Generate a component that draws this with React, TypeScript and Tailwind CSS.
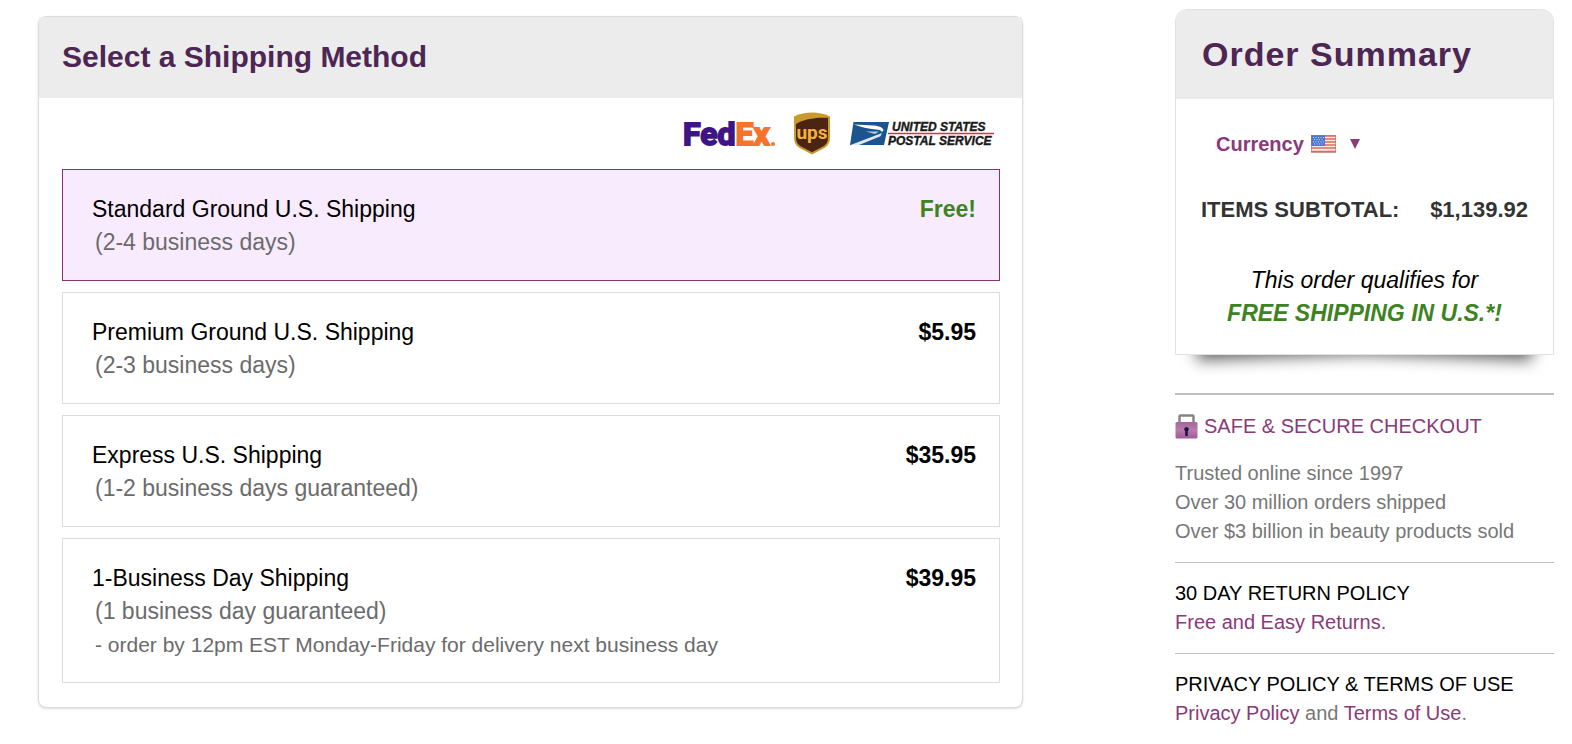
import React, { useState } from "react";

interface ShippingMethod {
  id: string;
  name: string;
  time: string;
  note?: string;
  price: string;
  free?: boolean;
}

const shippingMethods: ShippingMethod[] = [
  {
    id: "standard",
    name: "Standard Ground U.S. Shipping",
    time: "(2-4 business days)",
    price: "Free!",
    free: true,
  },
  {
    id: "premium",
    name: "Premium Ground U.S. Shipping",
    time: "(2-3 business days)",
    price: "$5.95",
  },
  {
    id: "express",
    name: "Express U.S. Shipping",
    time: "(1-2 business days guaranteed)",
    price: "$35.95",
  },
  {
    id: "one-day",
    name: "1-Business Day Shipping",
    time: "(1 business day guaranteed)",
    note: "- order by 12pm EST Monday-Friday for delivery next business day",
    price: "$39.95",
  },
];

const FedExLogo: React.FC = () => (
  <svg width="92" height="43" viewBox="0 0 92 43" role="img" aria-label="FedEx">
    <text
      x="0"
      y="33"
      fontSize="32"
      fontWeight="700"
      strokeWidth="1.8"
      className="font-[Roboto,sans-serif]"
    >
      <tspan fill="#3f1585" stroke="#3f1585">Fed</tspan>
      <tspan fill="#f4742b" stroke="#f4742b">Ex</tspan>
    </text>
    <circle cx="90" cy="32" r="2" fill="#f4742b" />
  </svg>
);

const UpsLogo: React.FC = () => (
  <svg width="38" height="43" viewBox="0 0 38 43" role="img" aria-label="UPS">
    <path
      d="M1 4.5C7 1.500 13 .5 19 .5s12 1 18 4V25c0 6-2 9-6.500 11.500L19 42.500 7.500 36.500C3 34 1 31 1 25Z"
      fill="#c99a2e"
    />
    <path
      d="M3 12C11 7 22 5 35 5.800V25c0 5-1.500 7.500-5.500 9.800L19 40.300 8.500 34.800C4.500 32.500 3 30 3 25Z"
      fill="#4b2414"
    />
    <text
      x="19"
      y="27"
      fontSize="19"
      fontWeight="700"
      textAnchor="middle"
      fill="#f0b43c"
      className="font-[Roboto,sans-serif]"
    >
      ups
    </text>
  </svg>
);

const UspsLogo: React.FC = () => (
  <svg
    width="146"
    height="27"
    viewBox="0 0 146 27"
    role="img"
    aria-label="United States Postal Service"
  >
    <path d="M4.500 2H40l-5 23H1Z" fill="#1c5490" />
    <path d="M5 4.500 25 5.500c6 .5 9.500 2.500 9.500 5L33 12c-1.500-2-3-2.300-6-2.500C19 9 12 7 5 4.500Z" fill="#fff" />
    <path d="M1.500 25 33 13l-1.500 3.200L10 25Z" fill="#dfe8f1" />
    <path d="M17 11.500h13l-4 2.500Z" fill="#b9cbdd" />
    <path d="M39 13.500h106" stroke="#d8324a" strokeWidth="1.300" />
    <g
      fontSize="12"
      fontWeight="700"
      fontStyle="italic"
      fill="#1a1a1a"
      stroke="#1a1a1a"
      strokeWidth=".4"
      className="font-['Liberation_Sans',Arial,sans-serif]"
    >
      <text x="43" y="11">UNITED STATES</text>
      <text x="39" y="25">POSTAL SERVICE</text>
    </g>
  </svg>
);

const UsFlag: React.FC = () => (
  <svg width="25" height="18" viewBox="0 0 25 18" aria-hidden="true">
    <path d="M0 0h25v18H0z" fill="#f7ece8" />
    <path
      d="M0 1h25M0 4h25M0 7h25M0 10h25M0 13h25M0 16.500h25"
      stroke="#e0695c"
      strokeWidth="1.500"
    />
    <path d="M0 0h14v11H0z" fill="#4a76cc" />
    <path
      d="M2 2.500h11M3 4.700h10M2 6.900h11M3 9h10"
      stroke="#d5e2fa"
      strokeWidth="1"
      strokeDasharray="1 1.500"
    />
    <path d="M.5.5h24v17H.5z" fill="none" stroke="#b5765f" strokeOpacity=".6" />
  </svg>
);

const LockIcon: React.FC = () => (
  <svg width="23" height="25" viewBox="0 0 23 25" aria-hidden="true">
    <defs>
      <linearGradient id="lock-body" x1="0" y1="0" x2="0" y2="1">
        <stop offset="0" stopColor="#a8649c" />
        <stop offset=".5" stopColor="#b77bad" />
        <stop offset="1" stopColor="#a0589a" />
      </linearGradient>
    </defs>
    <path d="M4.500 9V2.500q0-1 1-1h12q1 0 1 1V9" fill="none" stroke="#858585" strokeWidth="2.500" />
    <rect x=".5" y="8" width="22" height="16.500" rx="1.500" fill="url(#lock-body)" />
    <path d="M11.500 13a2.300 2.300 0 0 1 1.300 4.200V22h-2.600v-4.800A2.300 2.300 0 0 1 11.500 13Z" fill="#24103a" />
  </svg>
);

// Lifted-corner shadow that hangs below the summary card
const CardShadow: React.FC = () => (
  <svg
    className="block h-[38px] w-full"
    viewBox="0 0 379 38"
    preserveAspectRatio="none"
    aria-hidden="true"
  >
    <defs>
      <filter
        id="card-blur"
        filterUnits="userSpaceOnUse"
        x="-20"
        y="-60"
        width="420"
        height="120"
        colorInterpolationFilters="sRGB"
      >
        <feGaussianBlur stdDeviation="8" />
      </filter>
    </defs>
    <path
      d="M22-30H357V5Q270 1 190-1 110 1 22 5Z"
      fill="#000"
      fillOpacity=".65"
      filter="url(#card-blur)"
    />
  </svg>
);

const ShippingCard: React.FC = () => {
  const [selected, setSelected] = useState("standard");

  return (
    <section className="mt-4 min-w-0 flex-1 rounded-lg border border-[#dcdcdc] bg-white shadow-sm">
      <h1 className="bg-[#ececec] px-[23px] pt-[22px] pb-[23px] text-[30px] leading-9 font-bold text-[#4d2653]">
        Select a Shipping Method
      </h1>

      <div className="pr-[22px] pb-6 pl-[23px]">
        <div className="flex items-center justify-end gap-[18px] py-[14px] pr-[5px]">
          <FedExLogo />
          <UpsLogo />
          <UspsLogo />
        </div>

        <fieldset aria-label="Shipping method" className="flex flex-col gap-[11px]">
          {shippingMethods.map((method) => (
            <label
              key={method.id}
              className="flex cursor-pointer justify-between border border-[#dcdcdc] pt-[23px] pr-[23px] pb-[21px] pl-[29px] text-[23px] leading-[33px] has-[:checked]:border-[#8a3073] has-[:checked]:bg-[#f9ebfe]"
            >
              <input
                type="radio"
                name="shipping"
                value={method.id}
                checked={selected === method.id}
                onChange={() => setSelected(method.id)}
                className="sr-only"
              />
              <span>
                <span className="block">{method.name}</span>
                <span className="block pl-[3px] text-[#6b6b6b]">{method.time}</span>
                {method.note && (
                  <span className="block pl-[3px] text-[21px] leading-[33px] text-[#6b6b6b]">
                    {method.note}
                  </span>
                )}
              </span>
              <span className={`font-bold ${method.free ? "text-[#3d8322]" : "text-black"}`}>
                {method.price}
              </span>
            </label>
          ))}
        </fieldset>
      </div>
    </section>
  );
};

const OrderSummary: React.FC = () => (
  <section>
    <div className="overflow-hidden rounded-t-xl border border-[#e2e2e2] bg-white">
      <h2 className="bg-[#ececec] px-[26px] py-6 text-[34px] leading-[41px] font-bold tracking-[1px] text-[#4d2653]">
        Order Summary
      </h2>
      <div className="px-[25px] pt-[30px] pb-6">
        <button
          type="button"
          className="ml-[15px] flex h-[30px] cursor-pointer items-center text-xl font-bold text-[#8a3a78]"
        >
          Currency
          <span className="mr-[14px] ml-[7px]">
            <UsFlag />
          </span>
          <svg width="10" height="10" viewBox="0 0 10 10" aria-hidden="true">
            <path d="M0 0h10L5 10Z" fill="currentColor" />
          </svg>
        </button>
        <div className="mt-[34px] flex justify-between text-[22px] leading-[33px] font-bold text-[#333]">
          <span>ITEMS SUBTOTAL:</span>
          <span>$1,139.92</span>
        </div>
        <p className="mt-[38px] text-center text-[23px] leading-[33px] text-black italic">
          This order qualifies for
          <br />
          <strong className="text-[#3d8322]">FREE SHIPPING IN U.S.*!</strong>
        </p>
      </div>
    </div>
    <CardShadow />
  </section>
);

const App: React.FC = () => {
  return (
    <main className="flex min-h-screen items-start gap-[152px] bg-white pr-[18px] pb-4 pl-[38px] font-['Liberation_Sans',Arial,sans-serif] text-black">
      <ShippingCard />

      <aside className="mt-[9px] w-[379px] shrink-0 text-xl leading-[29px] text-[#777]">
        <OrderSummary />

        <div className="border-t-2 border-[#bfbfbf] pt-[17px] pb-4">
          <a href="#secure" className="flex items-center gap-[6px] text-[#8a3a78]">
            <LockIcon />
            SAFE &amp; SECURE CHECKOUT
          </a>
          <p className="mt-[18px]">
            Trusted online since 1997
            <br />
            Over 30 million orders shipped
            <br />
            Over $3 billion in beauty products sold
          </p>
        </div>

        <div className="border-t border-[#bfbfbf] py-4">
          <h3 className="text-black">30 DAY RETURN POLICY</h3>
          <a href="#returns" className="block text-[#8a3a78]">
            Free and Easy Returns.
          </a>
        </div>

        <div className="border-t border-[#bfbfbf] pt-4">
          <h3 className="text-black">PRIVACY POLICY &amp; TERMS OF USE</h3>
          <p>
            <a href="#privacy" className="text-[#8a3a78]">
              Privacy Policy
            </a>{" "}
            and{" "}
            <a href="#terms" className="text-[#8a3a78]">
              Terms of Use
            </a>
            .
          </p>
        </div>
      </aside>
    </main>
  );
};

export default App;
